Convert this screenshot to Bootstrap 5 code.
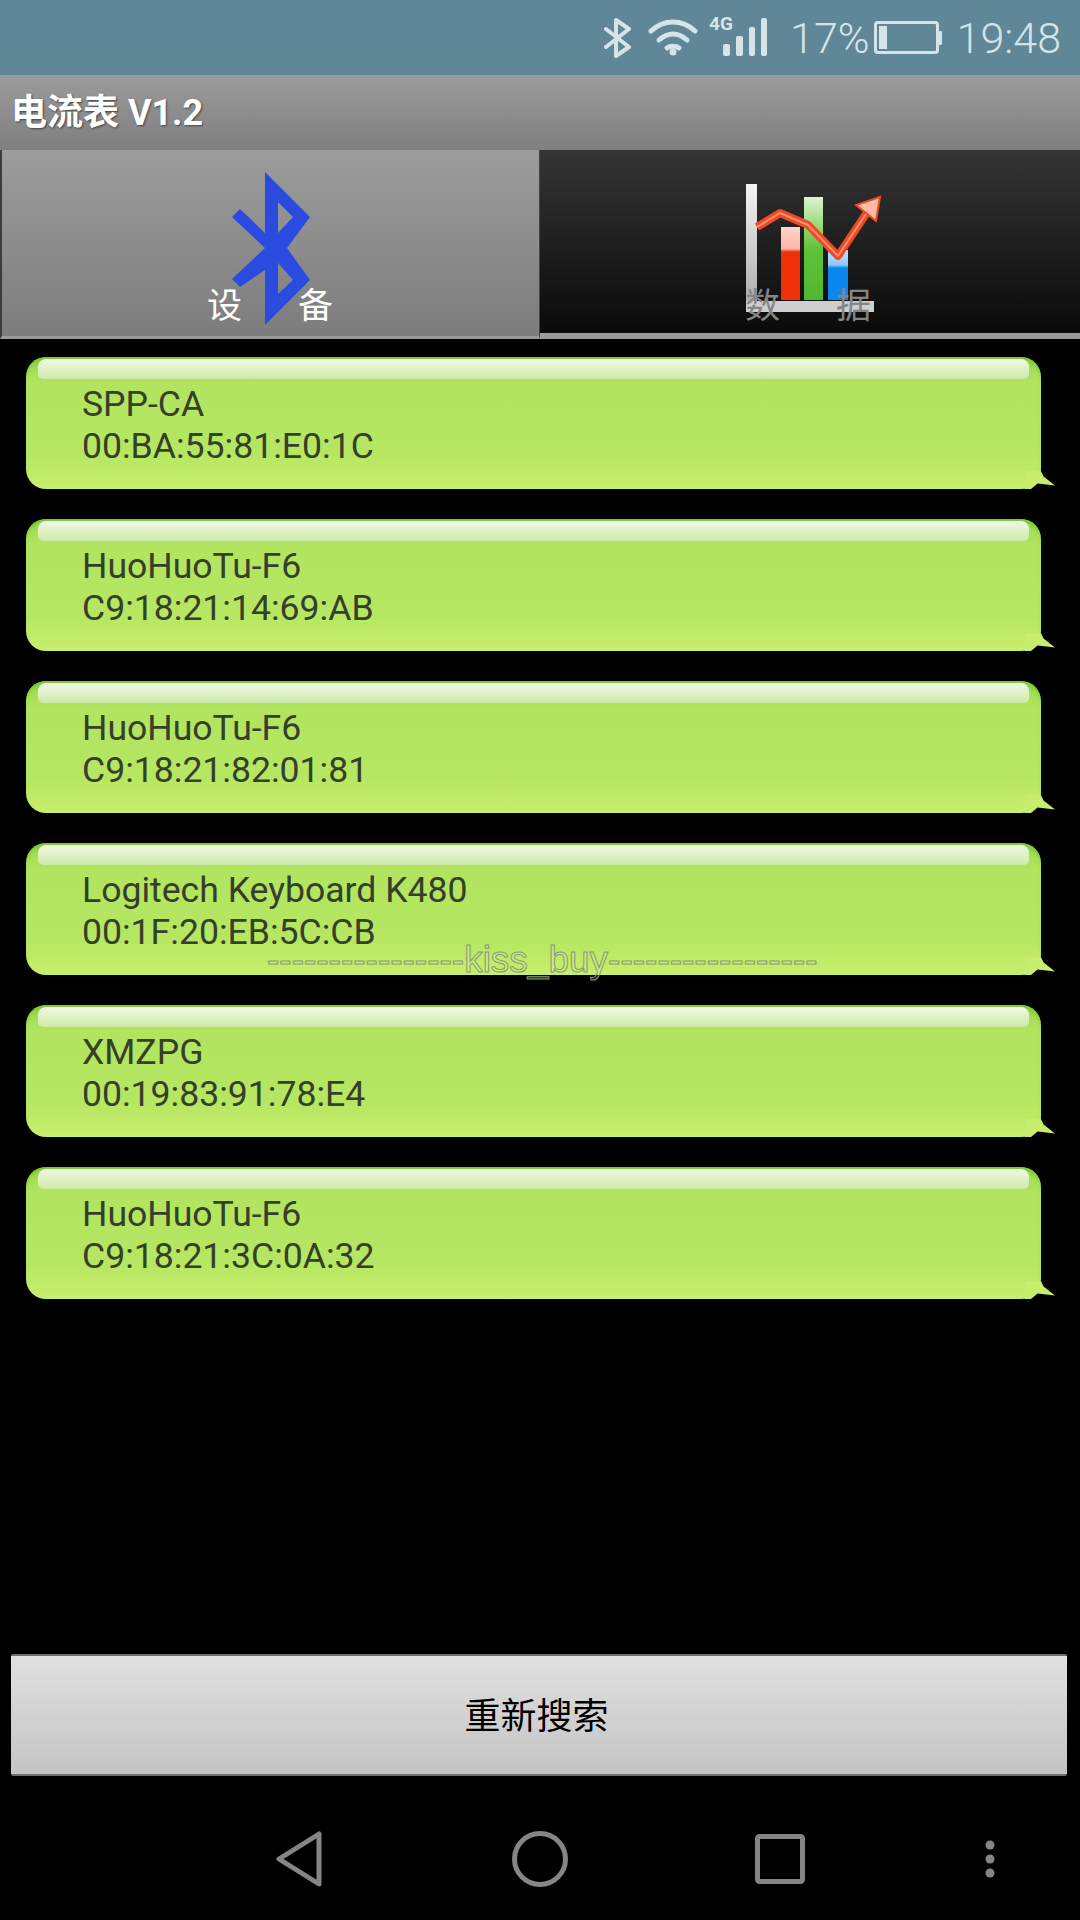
<!DOCTYPE html>
<html lang="zh">
<head>
    <meta charset="UTF-8">
    <meta name="viewport" content="width=device-width, initial-scale=1.0">
    <title>电流表 V1.2</title>
    <link href="https://cdn.jsdelivr.net/npm/bootstrap@5.3.0/dist/css/bootstrap.min.css" rel="stylesheet">
    <style>
        body { background: #000; font-family: Roboto, "Noto Sans CJK SC", sans-serif; }
        .phone-screen { width: 1080px; height: 1920px; background: #000; overflow: hidden; position: relative; }

        .status-strip { height: 75px; background: #5f8797; color: #d5e4e9; padding-right: 19px; font-weight: 300; font-size: 43px; line-height: 50px; }
        .status-bt { margin-right: 16px; }
        .status-wifi { margin-right: 11px; }
        .status-pct { margin-left: 21px; }
        .status-batt { margin-left: 4px; }
        .status-time { margin-left: 15px; }

        .title-strip { height: 75px; padding-left: 11px; background: linear-gradient(#9b9b9b, #7f7f7f); color: #fff; font-family: Roboto, "Noto Sans CJK SC", sans-serif; font-weight: 700; font-size: 36px; text-shadow: 1px 1px 2px #444; }

        .tab-strip { height: 189px; background: #9a9a9a; }
        .tab-item { height: 183px; position: relative; }
        .tab-on { height: 189px; background: linear-gradient(#9c9c9c, #7d7d7d); border-left: 2px solid #3c3c3c; border-right: 1px solid #444; border-bottom: 3px solid #9a9a9a; }
        .tab-off { background: linear-gradient(#353535, #0a0a0a); }
        .tab-word { position: absolute; top: 133px; font-family: "Noto Sans CJK SC", sans-serif; font-size: 35px; line-height: 40px; }
        .tab-on .tab-word { color: #fff; }
        .tab-off .tab-word { color: #858585; }
        .tab-svg { position: absolute; }

        .bubble-list { padding: 18px 26px 0 26px; gap: 30px; }
        .bubble-item { width: 1015px; height: 132px; padding: 26px 0 0 56px; position: relative; border-radius: 20px; background: linear-gradient(#9ddc50 0, #b2e45f 20%, #b7e762 75%, #c8ee6c 100%); box-shadow: inset 0 7px 6px -4px #72c22e; color: #33402a; font-size: 35.600px; line-height: 42px; }
        .bubble-item::before { content: ""; position: absolute; left: 12px; right: 12px; top: 2px; height: 20px; border-radius: 8px 8px 5px 5px; background: linear-gradient(#f2f7e8, #cdeba6); filter: blur(.6px); }
        .bubble-item::after { content: ""; position: absolute; right: -14px; bottom: 0; width: 30px; height: 18px; background: #c6ed6b; clip-path: polygon(0 0, 53% 0, 62% 30%, 100% 80%, 42% 70%, 20% 100%, 0 100%); }

        .mark-text { position: absolute; left: 267px; top: 939px; font-family: "Liberation Sans", sans-serif; font-size: 37px; line-height: 42px; color: rgba(255, 255, 255, .15); -webkit-text-stroke: 1px #88967a; white-space: nowrap; }

        .search-btn { margin: 0 13px 0 11px; width: 1056px; height: 122px; padding: 0 5px 4px 0; border: 0; border-top: 2px solid #6e6e6e; border-bottom: 2px solid #6e6e6e; border-radius: 2px; background: linear-gradient(#e0e0e0, #c4c4c4); color: #000; font-family: "Noto Sans CJK SC", sans-serif; font-size: 36px; }
        .search-btn:hover { background: linear-gradient(#e0e0e0, #c4c4c4); color: #000; }

        .nav-keys { height: 144px; padding: 21px 0 0 180px; display: grid; grid-template-columns: 240px 240px 240px 180px; }
    </style>
</head>
<body>
    <div class="phone-screen d-flex flex-column">

        <!-- status bar -->
        <div class="status-strip d-flex align-items-center justify-content-end flex-shrink-0">
            <svg class="status-bt" width="28" height="40" viewBox="0 0 28 40" fill="none" stroke="#d5e4e9" stroke-width="4" stroke-linejoin="round" stroke-linecap="round">
                <path d="M2 11 L25 29 L12 38 L12 2 L25 11 L2 29"/>
            </svg>
            <svg class="status-wifi" width="50" height="38" viewBox="0 0 50 38" fill="none" stroke="#d5e4e9" stroke-width="5" stroke-linecap="round">
                <path d="M3 12 C16 0 34 0 47 12"/>
                <path d="M11 21 C20 13 30 13 39 21"/>
                <path d="M19 29 C22 26.500 28 26.500 31 29"/>
                <circle cx="25" cy="33" r="3.500" fill="#d5e4e9" stroke="none"/>
            </svg>
            <svg width="60" height="46" viewBox="0 0 60 46">
                <text x="0" y="15" font-family="Roboto, sans-serif" font-weight="700" font-size="19" fill="#d5e4e9">4G</text>
                <rect x="14" y="29" width="7" height="12" rx="2" fill="#d5e4e9"/>
                <rect x="27" y="21" width="7" height="20" rx="2" fill="#d5e4e9"/>
                <rect x="40" y="12" width="6" height="29" rx="2" fill="#d5e4e9"/>
                <rect x="52" y="3" width="6" height="38" rx="2" fill="#d5e4e9"/>
            </svg>
            <span class="status-pct">17%</span>
            <svg class="status-batt" width="68" height="34" viewBox="0 0 68 34">
                <rect x="1.500" y="1.500" width="62" height="30" rx="2.500" fill="none" stroke="#d5e4e9" stroke-width="3"/>
                <rect x="5" y="5" width="8" height="23" fill="#d5e4e9"/>
                <rect x="65" y="10" width="3" height="14" rx="1" fill="#d5e4e9"/>
            </svg>
            <span class="status-time">19:48</span>
        </div>

        <!-- title -->
        <div class="title-strip d-flex align-items-center flex-shrink-0">电流表 V1.2</div>

        <!-- tabs -->
        <div class="tab-strip row g-0 flex-shrink-0">
            <div class="col-6 tab-item tab-on">
                <svg class="tab-svg" style="left:228px;top:22px" width="82" height="154" viewBox="0 0 82 154">
                    <path fill="#2a4be0" fill-rule="evenodd" d="M35 0 L80 45 L57 76 L80 108 L35 153 L35 98 L10 115 L2 107 L35 76 L2 45 L10 37 L35 61 Z M48 30 L63 45 L48 61 Z M48 91 L63 108 L48 122 Z"/>
                </svg>
                <span class="tab-word" style="left:205px">设</span>
                <span class="tab-word" style="left:296px">备</span>
            </div>
            <div class="col-6 tab-item tab-off">
                <svg class="tab-svg" style="left:200px;top:30px" width="150" height="140" viewBox="0 0 150 140">
                    <defs>
                        <linearGradient id="axisFill" x1="0" y1="0" x2="0" y2="1"><stop offset="0" stop-color="#f4f4f4"/><stop offset="1" stop-color="#a8a8a8"/></linearGradient>
                        <linearGradient id="redFill" x1="0" y1="0" x2="0" y2="1"><stop offset="0" stop-color="#ffd5cc"/><stop offset=".3" stop-color="#ffb5a5"/><stop offset=".34" stop-color="#f03008"/><stop offset="1" stop-color="#f03008"/></linearGradient>
                        <linearGradient id="greenFill" x1="0" y1="0" x2="0" y2="1"><stop offset="0" stop-color="#dcf5cf"/><stop offset=".5" stop-color="#5fc238"/><stop offset="1" stop-color="#50b82e"/></linearGradient>
                        <linearGradient id="blueFill" x1="0" y1="0" x2="0" y2="1"><stop offset="0" stop-color="#c8e4fa"/><stop offset=".3" stop-color="#8ac8f5"/><stop offset=".36" stop-color="#0a88f0"/><stop offset="1" stop-color="#0a88f0"/></linearGradient>
                    </defs>
                    <rect x="6" y="4" width="11" height="128" fill="url(#axisFill)"/>
                    <rect x="6" y="121" width="128" height="11" fill="#cfcfcf"/>
                    <rect x="41" y="47" width="19" height="73" fill="url(#redFill)"/>
                    <rect x="64" y="17" width="19" height="103" fill="url(#greenFill)"/>
                    <rect x="88" y="70" width="20" height="50" fill="url(#blueFill)"/>
                    <path d="M17 47 L40 33 L68 45 L98 76 L130 28" fill="none" stroke="#ee4b25" stroke-width="8" stroke-linejoin="round"/>
                    <path d="M17 47 L40 33 L68 45 L98 76 L130 28" fill="none" stroke="#ff8f74" stroke-width="2" stroke-linejoin="round"/>
                    <path d="M140 17 L116 25 L136 41 Z" fill="#ffb9a8" stroke="#ee4b25" stroke-width="2"/>
                </svg>
                <span class="tab-word" style="left:205px">数</span>
                <span class="tab-word" style="left:296px">据</span>
            </div>
        </div>

        <!-- device list -->
        <div class="bubble-list d-flex flex-column flex-grow-1" id="deviceList"></div>

        <div class="mark-text">----------------kiss_buy-----------------</div>

        <button class="btn search-btn flex-shrink-0">重新搜索</button>

        <!-- system keys -->
        <div class="nav-keys align-items-center flex-shrink-0">
            <svg class="mx-auto d-block" width="48" height="56" viewBox="0 0 48 56" fill="none" stroke="#858585" stroke-width="5" stroke-linejoin="round"><path d="M43 3 L43 53 L3 28 Z"/></svg>
            <svg class="mx-auto d-block" width="56" height="56" viewBox="0 0 56 56" fill="none" stroke="#858585" stroke-width="5"><circle cx="28" cy="28" r="25.500"/></svg>
            <svg class="mx-auto d-block" width="50" height="50" viewBox="0 0 50 50" fill="none" stroke="#858585" stroke-width="5"><rect x="2.500" y="2.500" width="45" height="45" rx="2"/></svg>
            <svg class="mx-auto d-block" width="10" height="38" viewBox="0 0 10 38" fill="#858585"><circle cx="5" cy="5" r="4.500"/><circle cx="5" cy="19" r="4.500"/><circle cx="5" cy="33" r="4.500"/></svg>
        </div>
    </div>

    <script>
        const devices = [
            ['SPP-CA', '00:BA:55:81:E0:1C'],
            ['HuoHuoTu-F6', 'C9:18:21:14:69:AB'],
            ['HuoHuoTu-F6', 'C9:18:21:82:01:81'],
            ['Logitech Keyboard K480', '00:1F:20:EB:5C:CB'],
            ['XMZPG', '00:19:83:91:78:E4'],
            ['HuoHuoTu-F6', 'C9:18:21:3C:0A:32']
        ];
        document.getElementById('deviceList').innerHTML = devices.map(d =>
            `<div class="bubble-item">${d[0]}<br>${d[1]}</div>`
        ).join('');
    </script>
    <script src="https://cdn.jsdelivr.net/npm/bootstrap@5.3.0/dist/js/bootstrap.bundle.min.js"></script>
</body>
</html>
